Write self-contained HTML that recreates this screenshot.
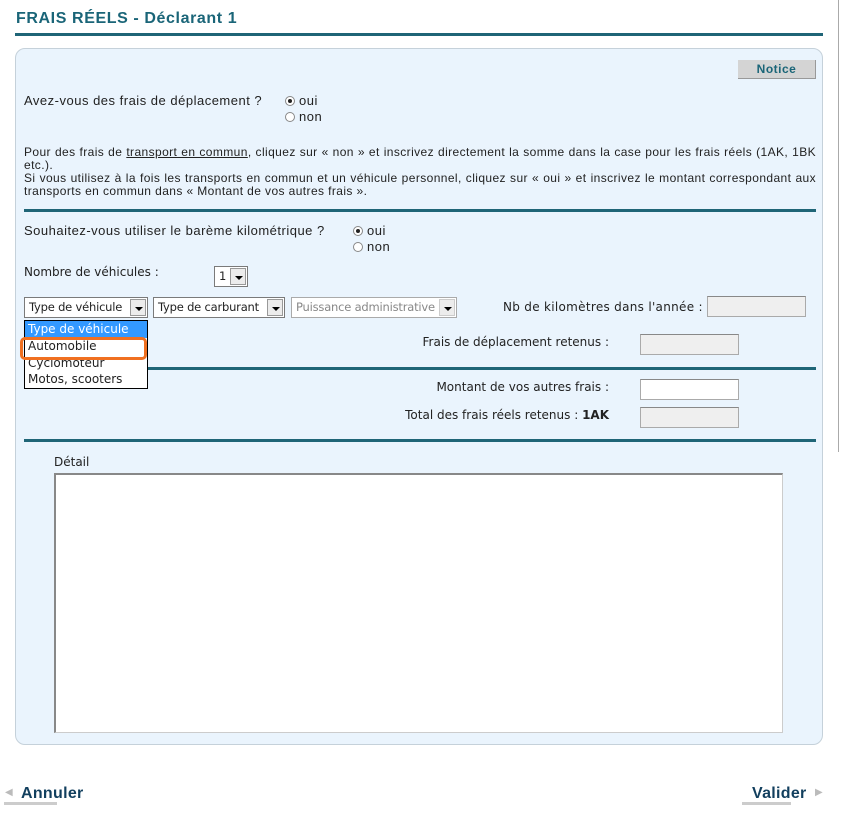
<!DOCTYPE html>
<html><head><meta charset="utf-8"><style>
*{margin:0;padding:0;box-sizing:border-box}
body{width:841px;height:823px;background:#fff;position:relative;font-family:"Liberation Sans","DejaVu Sans",sans-serif;font-size:13px;letter-spacing:.5px;color:#222;overflow:hidden}
.a{position:absolute;white-space:nowrap}
.d{font-family:"DejaVu Sans",sans-serif;font-size:12px;letter-spacing:0}
.title{left:16px;top:10px;font-weight:bold;font-size:16px;letter-spacing:.6px;color:#1a6578}
.hr{position:absolute;height:3px;background:#1f6577}
.panel{position:absolute;left:15px;top:48px;width:808px;height:697px;background:#eaf4fd;border:1px solid #c5d1da;border-radius:10px}
.btn{left:738px;top:60px;width:78px;height:19px;background:#d4d4d4;border-right:1px solid #999;border-bottom:1px solid #999;font-weight:bold;color:#1a6578;text-align:center;line-height:18px;font-size:12px}
.rad{display:inline-block;width:10px;height:10px;border:1px solid #888;border-radius:50%;background:#fff;vertical-align:-1px;margin-right:4px;position:relative}
.rad.on::after{content:"";position:absolute;left:2px;top:2px;width:4px;height:4px;border-radius:50%;background:#222}
.note{left:24px;font-size:12px;letter-spacing:.4px;width:792px;white-space:normal;text-align:justify;line-height:13px}
.sel{position:absolute;height:21px;background:#fff;border:1px solid #7a7a7a;line-height:19px;padding-left:4px;white-space:nowrap;overflow:hidden;font-size:11.5px;letter-spacing:-.2px}
.sel .ar{position:absolute;right:1px;top:1px;width:16px;height:17px;background:#ececec;border:1px solid #999}
.sel .ar::after{content:"";position:absolute;left:4px;top:7px;border-left:4px solid transparent;border-right:4px solid transparent;border-top:4px solid #000}
.inp{position:absolute;width:99px;height:21px;background:#efefef;border:1px solid #aaa;border-top-color:#888}
.r{right:232px}
</style></head><body>
<div style="position:absolute;left:838px;top:0;width:1px;height:452px;background:#aaa"></div>
<div class="a title">FRAIS RÉELS - Déclarant 1</div>
<div class="hr" style="left:15px;top:33px;width:808px"></div>
<div class="panel"></div>
<div class="a btn">Notice</div>
<div class="a" style="left:24px;top:93px">Avez-vous des frais de déplacement ?</div>
<div class="a" style="left:285px;top:93px"><span class="rad on"></span>oui</div>
<div class="a" style="left:285px;top:109px"><span class="rad"></span>non</div>
<div class="a note" style="top:146px">Pour des frais de <u>transport en commun</u>, cliquez sur « non » et inscrivez directement la somme dans la case pour les frais réels (1AK, 1BK etc.).<br>Si vous utilisez à la fois les transports en commun et un véhicule personnel, cliquez sur « oui » et inscrivez le montant correspondant aux transports en commun dans « Montant de vos autres frais ».</div>
<div class="hr" style="left:24px;top:209px;width:792px"></div>
<div class="a" style="left:24px;top:223px">Souhaitez-vous utiliser le barème kilométrique ?</div>
<div class="a" style="left:353px;top:223px"><span class="rad on"></span>oui</div>
<div class="a" style="left:353px;top:239px"><span class="rad"></span>non</div>
<div class="a d" style="left:24px;top:265px">Nombre de véhicules :</div>
<div class="sel d" style="left:214px;top:266px;width:34px">1<span class="ar"></span></div>
<div class="sel d" style="left:24px;top:297px;width:124px">Type de véhicule<span class="ar"></span></div>
<div class="sel d" style="left:153px;top:297px;width:132px">Type de carburant<span class="ar"></span></div>
<div class="sel d" style="left:291px;top:297px;width:166px;color:#888;border-color:#aaa">Puissance administrative<span class="ar" style="border-color:#ccc"></span></div>
<div class="a d" style="left:503px;top:300px;letter-spacing:.3px">Nb de kilomètres dans l'année :</div>
<div class="inp" style="left:707px;top:296px"></div>
<div class="a d r" style="top:335px">Frais de déplacement retenus :</div>
<div class="inp" style="left:640px;top:334px"></div>
<div class="hr" style="left:24px;top:367px;width:792px"></div>
<div class="a d r" style="top:380px">Montant de vos autres frais :</div>
<div class="inp" style="left:640px;top:379px;background:#fff"></div>
<div class="a d r" style="top:408px">Total des frais réels retenus : <b>1AK</b></div>
<div class="inp" style="left:640px;top:407px"></div>
<div class="hr" style="left:24px;top:439px;width:792px"></div>
<div class="d" style="position:absolute;left:24px;top:320px;width:124px;height:69px;background:#fff;border:1px solid #000;line-height:17px;white-space:nowrap;overflow:hidden">
<div style="background:#3399ff;color:#fff;padding-left:3px;height:17px">Type de véhicule</div>
<div style="padding-left:3px">Automobile</div>
<div style="padding-left:3px;height:16px;overflow:hidden">Cyclomoteur</div>
<div style="padding-left:3px">Motos, scooters</div>
</div>
<div style="position:absolute;left:20px;top:337px;width:127px;height:23px;border:3px solid #f07020;border-radius:5px"></div>
<div class="a d" style="left:54px;top:455px">Détail</div>
<div style="position:absolute;left:54px;top:473px;width:729px;height:260px;background:#fff;border:1px solid #ccc;border-top:2px solid #888;border-left:2px solid #888"></div>
<div class="a" style="left:5px;top:787px;color:#bbb;font-size:10px">◀</div>
<div class="a" style="left:21px;top:785px;font-weight:bold;font-size:16px;letter-spacing:.3px;color:#123f5e">Annuler</div>
<div style="position:absolute;left:4px;top:802px;width:53px;height:3px;background:#ccc"></div>
<div class="a" style="left:752px;top:785px;font-weight:bold;font-size:16px;letter-spacing:.3px;color:#123f5e">Valider</div>
<div class="a" style="left:815px;top:787px;color:#bbb;font-size:10px">▶</div>
<div style="position:absolute;left:742px;top:802px;width:49px;height:3px;background:#ccc"></div>
</body></html>
